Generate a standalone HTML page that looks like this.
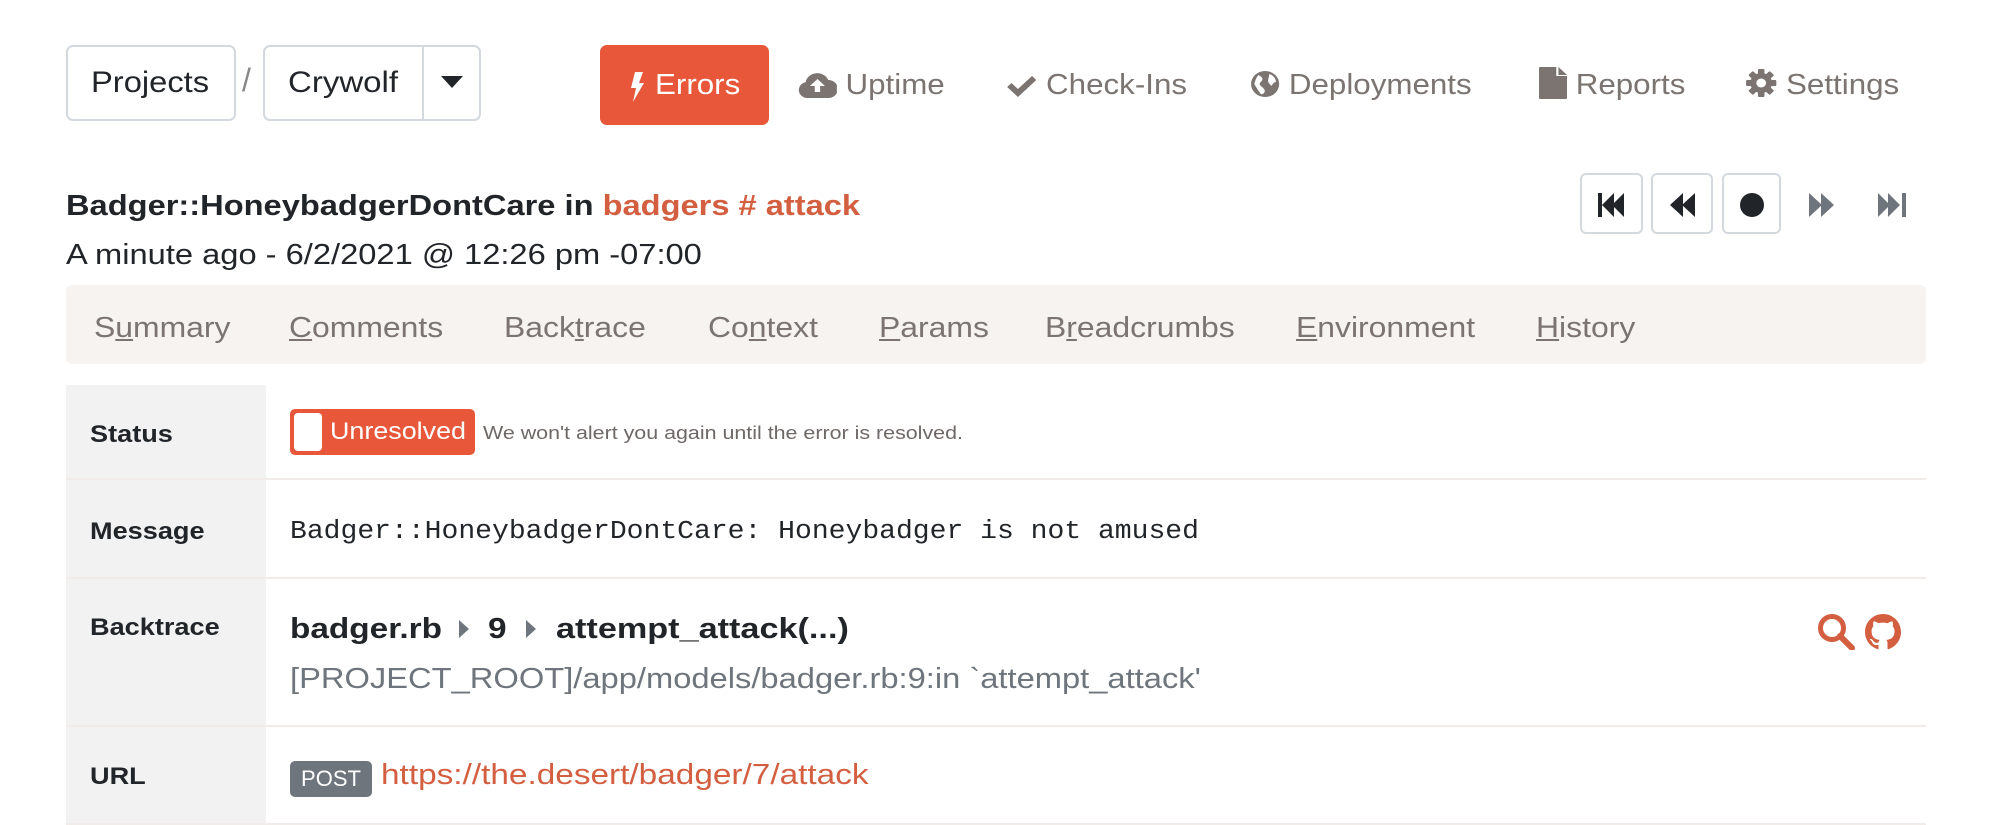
<!DOCTYPE html>
<html><head><meta charset="utf-8"><style>
*{box-sizing:border-box;margin:0;padding:0}
body{width:1990px;height:825px;background:#fff;font-family:"Liberation Sans",sans-serif;position:relative;overflow:hidden;color:#212529}
.a{position:absolute;white-space:nowrap;transform-origin:0 50%}
.box{position:absolute;border:2px solid #d3d9df;border-radius:7px}
.nav{position:absolute;top:67px;font-size:29px;color:#7b7471;line-height:36px;white-space:nowrap;transform:scaleX(1.08);transform-origin:0 50%}
.nav svg{vertical-align:-4px;margin-right:8px}
.tab{position:absolute;top:310px;font-size:29px;color:#7b7471;line-height:36px;white-space:nowrap;transform:scaleX(1.1);transform-origin:0 50%}
.pb{position:absolute;top:173px;height:61px;border:2px solid #d3d9df;border-radius:6px}
.lbl{position:absolute;left:90px;font-size:24px;font-weight:bold;color:#212529;transform:scaleX(1.13);transform-origin:0 50%}
</style></head><body>
<div class="box" style="left:66px;top:45px;width:170px;height:76px"></div>
<div class="a" style="left:91px;top:65px;font-size:30px;line-height:36px;transform:scaleX(1.09)">Projects</div>
<div class="a" style="left:242px;top:62px;font-size:32px;color:#888">/</div>
<div class="box" style="left:263px;top:45px;width:218px;height:76px"></div>
<div class="a" style="left:422px;top:46px;width:2px;height:74px;background:#d3d9df"></div>
<div class="a" style="left:288px;top:65px;font-size:30px;line-height:36px;transform:scaleX(1.1)">Crywolf</div>
<svg class="a" style="left:441px;top:76px" width="22" height="12"><path d="M0 0h22L11 12z" fill="#212529"/></svg>
<div class="a" style="left:600px;top:45px;width:169px;height:80px;background:#e8573a;border-radius:7px"></div>
<svg class="a" style="left:629px;top:72px" width="16" height="30"><path d="M6 0h8l-4 11h5L4 30l3-14H2z" fill="#fff"/></svg>
<div class="a" style="left:655px;top:67px;font-size:29px;color:#fff;line-height:36px;transform:scaleX(1.08)">Errors</div>
<div class="nav" style="left:798px"><svg width="36" height="26" viewBox="0 0 36 26"><path d="M9 26a8 8 0 0 1-2-15.8A11 11 0 0 1 28 8a8 8 0 0 1 0 18z" fill="#7b7471"/><path d="M18 7l-7 7h4.5v6h5v-6H25z" fill="#fff"/></svg>Uptime</div>
<div class="nav" style="left:1005px"><svg width="30" height="24" viewBox="0 0 30 24"><path d="M2 13l4-4 6 6L25 2l4 4-17 17z" fill="#7b7471"/></svg>Check-Ins</div>
<div class="nav" style="left:1250px"><svg width="28" height="28" viewBox="0 0 28 28"><circle cx="14" cy="14" r="13" fill="#7b7471"/><path d="M8 5c3 2 5 4 2 7s1 4 3 7-1 6-3 5c-2-3-4-6-6-10 1-4 2-7 4-9zM18 4c3 1 6 4 6 8-2 0-3 2-4 4-2-2-4-4-3-7z" fill="#fff"/></svg>Deployments</div>
<div class="nav" style="left:1539px"><svg width="26" height="32" viewBox="0 0 26 32" style="vertical-align:-5px"><path d="M0 1a1 1 0 0 1 1-1h15v9h10v22a1 1 0 0 1-1 1H1a1 1 0 0 1-1-1z M18 0l8 8h-8z" fill="#7b7471"/></svg>Reports</div>
<div class="nav" style="left:1745px"><svg width="30" height="30" viewBox="0 0 30 30"><g fill="#7b7471"><circle cx="15" cy="15" r="10"/><rect x="12" y="1" width="6" height="28" rx="1"/><rect x="12" y="1" width="6" height="28" rx="1" transform="rotate(45 15 15)"/><rect x="12" y="1" width="6" height="28" rx="1" transform="rotate(90 15 15)"/><rect x="12" y="1" width="6" height="28" rx="1" transform="rotate(135 15 15)"/></g><circle cx="15" cy="15" r="4.5" fill="#fff"/></svg>Settings</div>
<div class="a" style="left:66px;top:188px;font-size:29px;font-weight:bold;line-height:36px;transform:scaleX(1.125)">Badger::HoneybadgerDontCare in <span style="color:#d35f40">badgers # attack</span></div>
<div class="a" style="left:66px;top:237px;font-size:29px;line-height:36px;transform:scaleX(1.126)">A minute ago - 6/2/2021 @ 12:26 pm -07:00</div>
<div class="pb" style="left:1580px;width:63px"></div>
<div class="pb" style="left:1651px;width:62px"></div>
<div class="pb" style="left:1722px;width:59px"></div>
<svg class="a" style="left:1598px;top:193px" width="28" height="24"><path d="M0 0h4v24H0zM4 12L16 0v24zM14 12L26 0v24z" fill="#212529"/></svg>
<svg class="a" style="left:1670px;top:193px" width="26" height="24"><path d="M0 12L13 0v24zM12 12L25 0v24z" fill="#212529"/></svg>
<svg class="a" style="left:1739px;top:192px" width="26" height="26"><circle cx="13" cy="13" r="12" fill="#212529"/></svg>
<svg class="a" style="left:1809px;top:193px" width="26" height="24"><path d="M0 0l13 12L0 24zM12 0l13 12-13 12z" fill="#6e757c"/></svg>
<svg class="a" style="left:1878px;top:193px" width="29" height="24"><path d="M0 0l12 12L0 24zM10 0l12 12-12 12zM24 0h4v24h-4z" fill="#6e757c"/></svg>
<div class="a" style="left:66px;top:285px;width:1860px;height:79px;background:#f6f3f1;border-radius:6px"></div>
<div class="tab" style="left:94px">S<u>u</u>mmary</div>
<div class="tab" style="left:289px"><u>C</u>omments</div>
<div class="tab" style="left:504px">Back<u>t</u>race</div>
<div class="tab" style="left:708px">Co<u>n</u>text</div>
<div class="tab" style="left:879px"><u>P</u>arams</div>
<div class="tab" style="left:1045px">B<u>r</u>eadcrumbs</div>
<div class="tab" style="left:1296px"><u>E</u>nvironment</div>
<div class="tab" style="left:1536px"><u>H</u>istory</div>
<div class="a" style="left:66px;top:385px;width:200px;height:440px;background:#f2f2f2"></div>
<div class="a" style="left:66px;top:478px;width:1860px;height:2px;background:#f1ece9"></div>
<div class="a" style="left:66px;top:577px;width:1860px;height:2px;background:#f1ece9"></div>
<div class="a" style="left:66px;top:725px;width:1860px;height:2px;background:#f1ece9"></div>
<div class="a" style="left:66px;top:823px;width:1860px;height:2px;background:#f1ece9"></div>
<div class="lbl" style="top:421px">Status</div>
<div class="lbl" style="top:518px">Message</div>
<div class="lbl" style="top:614px">Backtrace</div>
<div class="lbl" style="top:763px">URL</div>
<div class="a" style="left:290px;top:409px;width:185px;height:46px;background:#e8573a;border-radius:5px"></div>
<div class="a" style="left:294px;top:413px;width:28px;height:38px;background:#fff;border-radius:4px"></div>
<div class="a" style="left:330px;top:418px;font-size:24px;color:#fff;line-height:28px;transform:scaleX(1.12)">Unresolved</div>
<div class="a" style="left:483px;top:422px;font-size:18px;color:#6e6866;line-height:22px;transform:scaleX(1.19)">We won't alert you again until the error is resolved.</div>
<div class="a" style="left:290px;top:517px;font-family:'Liberation Mono',monospace;font-size:25.5px;line-height:30px;transform:scaleX(1.1)">Badger::HoneybadgerDontCare: Honeybadger is not amused</div>
<div class="a" style="left:290px;top:611px;font-size:29px;font-weight:bold;line-height:36px;transform:scaleX(1.15)">badger.rb</div>
<svg class="a" style="left:459px;top:620px" width="12" height="18"><path d="M0 0l10 9-10 9z" fill="#6e757c"/></svg>
<div class="a" style="left:488px;top:611px;font-size:29px;font-weight:bold;line-height:36px;transform:scaleX(1.15)">9</div>
<svg class="a" style="left:526px;top:620px" width="12" height="18"><path d="M0 0l10 9-10 9z" fill="#6e757c"/></svg>
<div class="a" style="left:556px;top:611px;font-size:29px;font-weight:bold;line-height:36px;transform:scaleX(1.18)">attempt_attack(...)</div>
<div class="a" style="left:290px;top:661px;font-size:29px;color:#6e757c;line-height:36px;transform:scaleX(1.127)">[PROJECT_ROOT]/app/models/badger.rb:9:in `attempt_attack'</div>
<svg class="a" style="left:1817px;top:613px" width="40" height="37" viewBox="0 0 40 37"><circle cx="15" cy="15" r="11.5" fill="none" stroke="#d35f40" stroke-width="5"/><path d="M23 23l12 12" stroke="#d35f40" stroke-width="6" stroke-linecap="round"/></svg>
<svg class="a" style="left:1865px;top:614px" width="36" height="36" viewBox="0 0 16 16"><path fill="#d35f40" d="M8 0C3.58 0 0 3.58 0 8c0 3.540 2.29 6.53 5.47 7.59.4.07.55-.17.55-.38 0-.19-.01-.82-.01-1.49-2.01.37-2.530-.49-2.69-.94-.09-.23-.48-.94-.82-1.130-.28-.15-.68-.52-.01-.53.63-.01 1.08.58 1.23.82.72 1.21 1.87.87 2.33.66.07-.52.28-.87.51-1.07-1.78-.2-3.64-.89-3.64-3.950 0-.87.31-1.59.82-2.15-.08-.2-.36-1.02.08-2.12 0 0 .67-.21 2.2.82.64-.18 1.32-.27 2-.27.68 0 1.36.09 2 .27 1.53-1.04 2.2-.82 2.2-.82.44 1.1.16 1.92.08 2.12.51.56.82 1.27.82 2.15 0 3.07-1.87 3.75-3.65 3.95.29.25.54.73.54 1.48 0 1.07-.01 1.93-.01 2.2 0 .21.15.46.55.38A8.013 8.013 0 0016 8c0-4.42-3.58-8-8-8z"/></svg>
<div class="a" style="left:290px;top:761px;width:82px;height:36px;background:#6e757c;border-radius:5px;color:#fff;font-size:22px;line-height:36px;text-align:center">POST</div>
<div class="a" style="left:381px;top:757px;font-size:29px;color:#d35f40;line-height:36px;transform:scaleX(1.15)">https://the.desert/badger/7/attack</div>
</body></html>
